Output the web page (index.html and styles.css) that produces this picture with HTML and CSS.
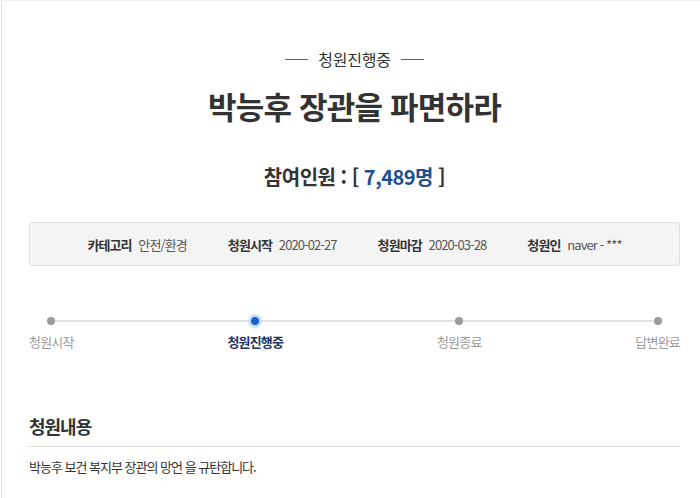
FILE: index.html
```html
<!DOCTYPE html>
<html lang="ko">
<head>
   <meta charset="UTF-8">
   <meta name="viewport" content="width=device-width, initial-scale=1.0">
   <title>청원 상세</title>
   <link rel="stylesheet" href="styles.css">
</head>
<body>
   <div class="page">
      <div class="status-head">
         <span class="status-line"></span>
         <span class="status-text">청원진행중</span>
         <span class="status-line"></span>
      </div>

      <h1 class="title">박능후 장관을 파면하라</h1>

      <div class="count">참여인원 : [ <span class="num">7,489명</span> ]</div>

      <div class="info-box">
         <div class="info-item"><b>카테고리</b> 안전/환경</div>
         <div class="info-item"><b>청원시작</b> 2020-02-27</div>
         <div class="info-item"><b>청원마감</b> 2020-03-28</div>
         <div class="info-item"><b>청원인</b> naver - ***</div>
      </div>

      <div class="progress">
         <div class="step">
            <span class="dot"></span>
            <span class="label">청원시작</span>
         </div>
         <div class="step active">
            <span class="dot"></span>
            <span class="label">청원진행중</span>
         </div>
         <div class="step">
            <span class="dot"></span>
            <span class="label">청원종료</span>
         </div>
         <div class="step">
            <span class="dot"></span>
            <span class="label">답변완료</span>
         </div>
      </div>

      <div class="content">
         <h2 class="content-title">청원내용</h2>
         <p class="content-text">박능후 보건 복지부 장관의 망언 을 규탄합니다.</p>
      </div>
   </div>
</body>
</html>
```

FILE: styles.css
```css
body {
   margin: 0;
   background: #fff;
   font-family: "Noto Sans CJK KR", "Noto Sans", sans-serif;
   color: #333;
}
.page {
   margin-left: 1px;
   border-left: 1px solid #e3e3e3;
   border-top: 1px solid #f0f0f0;
   padding: 0 20px 0 27px;
   height: 497px;
   overflow: hidden;
}
.status-head {
   margin-top: 46px;
   display: flex;
   justify-content: center;
   align-items: center;
   gap: 10px;
}
.status-line {
   width: 23px;
   height: 1px;
   background: #666;
}
.status-text {
   font-size: 16px;
   line-height: 24px;
   color: #333;
   letter-spacing: -0.2px;
}
.title {
   margin: 15px 0 0;
   text-align: center;
   font-size: 31px;
   line-height: 40px;
   font-weight: 700;
   color: #333;
   letter-spacing: -0.8px;
}
.count {
   margin-top: 37px;
   text-align: center;
   font-size: 20px;
   line-height: 28px;
   font-weight: 700;
   color: #333;
   letter-spacing: -0.5px;
}
.count .num {
   color: #1d4f91;
}
.info-box {
   margin-top: 31px;
   height: 42px;
   border: 1px solid #e0e0e0;
   border-radius: 3px;
   background: #f4f4f4;
   display: flex;
   justify-content: center;
   align-items: center;
   gap: 41px;
   font-size: 13px;
   color: #555;
   letter-spacing: -0.9px;
}
.info-item b {
   color: #333;
   margin-right: 4px;
}
.progress {
   position: relative;
   margin-top: 51px;
   display: flex;
   justify-content: space-between;
}
.progress::before {
   content: "";
   position: absolute;
   left: 20px;
   right: 20px;
   top: 3px;
   height: 2px;
   background: #e2e2e2;
}
.step {
   position: relative;
   display: flex;
   flex-direction: column;
   align-items: center;
}
.dot {
   width: 8px;
   height: 8px;
   border-radius: 50%;
   background: #9a9a9a;
}
.label {
   margin-top: 7px;
   font-size: 13px;
   line-height: 20px;
   color: #9a9a9a;
   letter-spacing: -0.8px;
}
.step.active .dot {
   background: #1565c8;
   box-shadow: 0 0 2px 3px #c6dcf6;
}
.step.active .label {
   color: #1e3560;
   font-weight: 700;
}
.content {
   margin-top: 61px;
}
.content-title {
   margin: 0;
   padding-bottom: 7px;
   border-bottom: 1px solid #ddd;
   font-size: 18px;
   line-height: 26px;
   font-weight: 700;
   color: #333;
   letter-spacing: -1px;
}
.content-text {
   margin: 10px 0 0;
   font-size: 13px;
   line-height: 20px;
   color: #333;
   letter-spacing: -1px;
}
```
